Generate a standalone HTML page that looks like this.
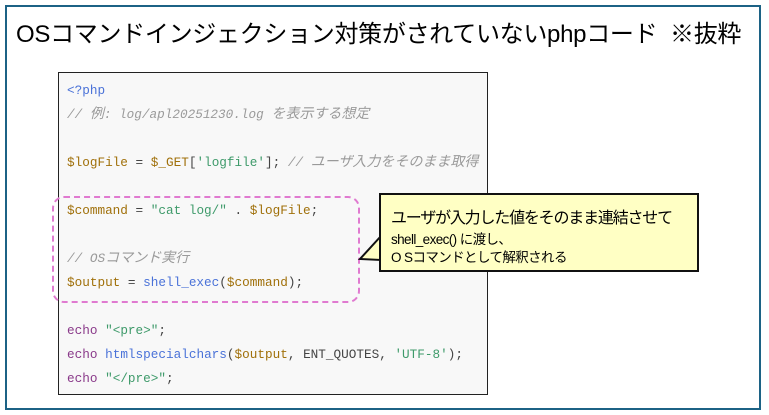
<!DOCTYPE html>
<html><head><meta charset="utf-8"><style>
body{margin:0;width:769px;height:415px;background:#fff;position:relative;overflow:hidden;font-family:"Liberation Sans","Noto Sans CJK JP",sans-serif}
.outer{position:absolute;left:5px;top:5px;width:752px;height:401px;border:2.5px solid #1c6285}
.title{position:absolute;left:16px;top:14px;font-size:24px;color:#000;white-space:pre;letter-spacing:-0.3px}
.code{position:absolute;left:58px;top:72px;width:428px;height:321px;border:1.3px solid #222;background:#f8f8f8}
.ln{position:absolute;left:67px;font-family:"Liberation Mono","Noto Sans CJK JP",monospace;font-size:12.7px;white-space:pre;line-height:16px}
.j{font-size:14px}
.v{color:#a0700a}.s{color:#3e9a6a}.f{color:#4a72d8}.k{color:#8a3a8a}.c{color:#9a9a9a;font-style:italic}.p{color:#444}
.dash{position:absolute;left:52px;top:196px;width:304px;height:103px;border:2px dashed #e07ad0;border-radius:12px}
.call{position:absolute;left:379px;top:193px;width:320px;height:79px;background:#ffffc4;border:2px solid #111;box-sizing:border-box}
.call div{position:absolute;left:10px;white-space:pre;color:#000}
</style></head><body>
<div class="outer"></div>
<div class="title">OSコマンドインジェクション対策がされていないphpコード  ※抜粋</div>
<div class="code"></div>
<div class="ln f" style="top:83px">&lt;?php</div>
<div class="ln c" style="top:107px">// <span class="j">例</span>: log/apl20251230.log <span class="j">を表示する想定</span></div>
<div class="ln" style="top:155px"><span class="v">$logFile</span><span class="p"> = </span><span class="v">$_GET</span><span class="p">[</span><span class="s">'logfile'</span><span class="p">]; </span><span class="c">// <span class="j">ユーザ入力をそのまま取得</span></span></div>
<div class="ln" style="top:203px"><span class="v">$command</span><span class="p"> = </span><span class="s">"cat log/"</span><span class="p"> . </span><span class="v">$logFile</span><span class="p">;</span></div>
<div class="ln c" style="top:251px">// OS<span class="j">コマンド実行</span></div>
<div class="ln" style="top:275px"><span class="v">$output</span><span class="p"> = </span><span class="f">shell_exec</span><span class="p">(</span><span class="v">$command</span><span class="p">);</span></div>
<div class="ln" style="top:323px"><span class="k">echo</span><span class="p"> </span><span class="s">"&lt;pre&gt;"</span><span class="p">;</span></div>
<div class="ln" style="top:347px"><span class="k">echo</span><span class="p"> </span><span class="f">htmlspecialchars</span><span class="p">(</span><span class="v">$output</span><span class="p">, ENT_QUOTES, </span><span class="s">'UTF-8'</span><span class="p">);</span></div>
<div class="ln" style="top:371px"><span class="k">echo</span><span class="p"> </span><span class="s">"&lt;/pre&gt;"</span><span class="p">;</span></div>
<div class="dash"></div>
<svg style="position:absolute;left:355px;top:230px" width="30" height="40"><polygon points="26,6 5,29 26,30" fill="#ffffc4" stroke="#111" stroke-width="2"/><rect x="25" y="0" width="4" height="40" fill="#ffffc4"/></svg>
<div class="call">
<div style="top:9px;font-size:16px;letter-spacing:-1.2px">ユーザが入力した値をそのまま連結させて</div>
<div style="top:33px;font-size:13.5px;letter-spacing:-0.6px">shell_exec() に渡し、</div>
<div style="top:51px;font-size:13.5px;letter-spacing:-0.6px">O Sコマンドとして解釈される</div>
</div>
</body></html>
